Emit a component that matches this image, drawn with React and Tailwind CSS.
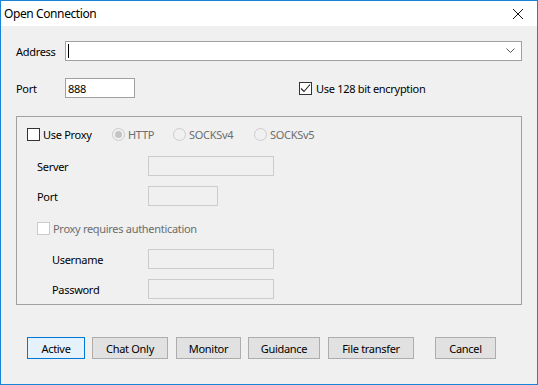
import React from "react";

const Check = ({ checked, disabled }) => (
  <span
    className={
      "w-[13px] h-[13px] shrink-0 border flex items-center justify-center " +
      (disabled ? "border-[#cccccc] bg-white" : "border-[#333333] bg-white")
    }
  >
    {checked && (
      <svg width="11" height="11" viewBox="0 0 11 11">
        <path d="M1 5.5 L4 8.5 L10 1.5" fill="none" stroke="#222" strokeWidth="1.1" />
      </svg>
    )}
  </span>
);

const Radio = ({ selected }) => (
  <span className="w-[13px] h-[13px] shrink-0 rounded-full border border-[#cccccc] bg-[#f0f0f0] flex items-center justify-center">
    {selected && <span className="w-[7px] h-[7px] rounded-full bg-[#c4c4c4]" />}
  </span>
);

const Field = ({ className = "" }) => (
  <div className={"h-[20px] border border-[#cccccc] bg-[#f0f0f0] " + className} />
);

const Btn = ({ label, width, primary }) => (
  <button
    className={
      "h-[22px] border flex items-center justify-center text-black " +
      width +
      (primary ? " border-[#0078d7] bg-[#e5f1fb]" : " border-[#adadad] bg-[#e1e1e1]")
    }
  >
    {label}
  </button>
);

export default function App() {
  return (
    <div className="w-[538px] h-[385px] border border-[#1883d7] bg-[#f0f0f0] flex flex-col font-['Noto_Sans',sans-serif] text-[11px] tracking-[-0.3px] text-black leading-none">
      {/* Title bar */}
      <div className="h-[25px] bg-white flex items-center justify-between pl-[3px] pr-[13px]">
        <span className="text-[12px] tracking-[-0.4px]">Open Connection</span>
        <svg width="12" height="12" viewBox="0 0 12 12">
          <path d="M1 1 L11 11 M11 1 L1 11" stroke="#111" strokeWidth="1" />
        </svg>
      </div>

      <div className="flex-1 px-[15px] pt-[15px]">
        {/* Address */}
        <div className="flex items-center h-[20px]">
          <span className="w-[49px]">Address</span>
          <div className="flex-1 h-[20px] border border-[#a0a0a0] bg-white flex items-center justify-between pl-[2px] pr-[6px]">
            <span className="w-[1px] h-[14px] bg-black" />
            <svg width="9" height="6" viewBox="0 0 9 6">
              <path d="M0.5 0.5 L4.5 4.5 L8.5 0.5" fill="none" stroke="#555" strokeWidth="1" />
            </svg>
          </div>
        </div>

        {/* Port */}
        <div className="flex items-center h-[20px] mt-[17px]">
          <span className="w-[49px]">Port</span>
          <div className="w-[70px] h-[20px] border border-[#a0a0a0] bg-white flex items-center pl-[2px]">
            888
          </div>
          <label className="ml-[164px] flex items-center gap-[4px]">
            <Check checked />
            <span>Use 128 bit encryption</span>
          </label>
        </div>

        {/* Proxy group */}
        <div className="mt-[18px] h-[189px] border border-[#a0a0a0] pl-[10px] pt-[11px]">
          <div className="flex items-center h-[13px]">
            <label className="w-[85px] flex items-center gap-[3px]">
              <Check />
              <span>Use Proxy</span>
            </label>
            <label className="w-[61px] flex items-center gap-[3px] text-[#6d6d6d]">
              <Radio selected />
              <span>HTTP</span>
            </label>
            <label className="w-[81px] flex items-center gap-[3px] text-[#6d6d6d]">
              <Radio />
              <span>SOCKSv4</span>
            </label>
            <label className="flex items-center gap-[3px] text-[#6d6d6d]">
              <Radio />
              <span>SOCKSv5</span>
            </label>
          </div>

          <div className="pl-[10px]">
            <div className="flex items-center mt-[15px]">
              <span className="w-[111px]">Server</span>
              <Field className="w-[126px]" />
            </div>
            <div className="flex items-center mt-[10px]">
              <span className="w-[111px]">Port</span>
              <Field className="w-[70px]" />
            </div>

            <label className="flex items-center gap-[3px] h-[13px] mt-[16px] text-[#6d6d6d]">
              <Check disabled />
              <span>Proxy requires authentication</span>
            </label>

            <div className="pl-[15px]">
              <div className="flex items-center mt-[14px]">
                <span className="w-[96px]">Username</span>
                <Field className="w-[126px]" />
              </div>
              <div className="flex items-center mt-[10px]">
                <span className="w-[96px]">Password</span>
                <Field className="w-[126px]" />
              </div>
            </div>
          </div>
        </div>

        {/* Buttons */}
        <div className="flex mt-[32px] ml-[11px]">
          <Btn label="Active" width="w-[58px]" primary />
          <div className="ml-[7px]"><Btn label="Chat Only" width="w-[76px]" /></div>
          <div className="ml-[8px]"><Btn label="Monitor" width="w-[65px]" /></div>
          <div className="ml-[7px]"><Btn label="Guidance" width="w-[72px]" /></div>
          <div className="ml-[8px]"><Btn label="File transfer" width="w-[86px]" /></div>
          <div className="ml-[21px]"><Btn label="Cancel" width="w-[61px]" /></div>
        </div>
      </div>
    </div>
  );
}
